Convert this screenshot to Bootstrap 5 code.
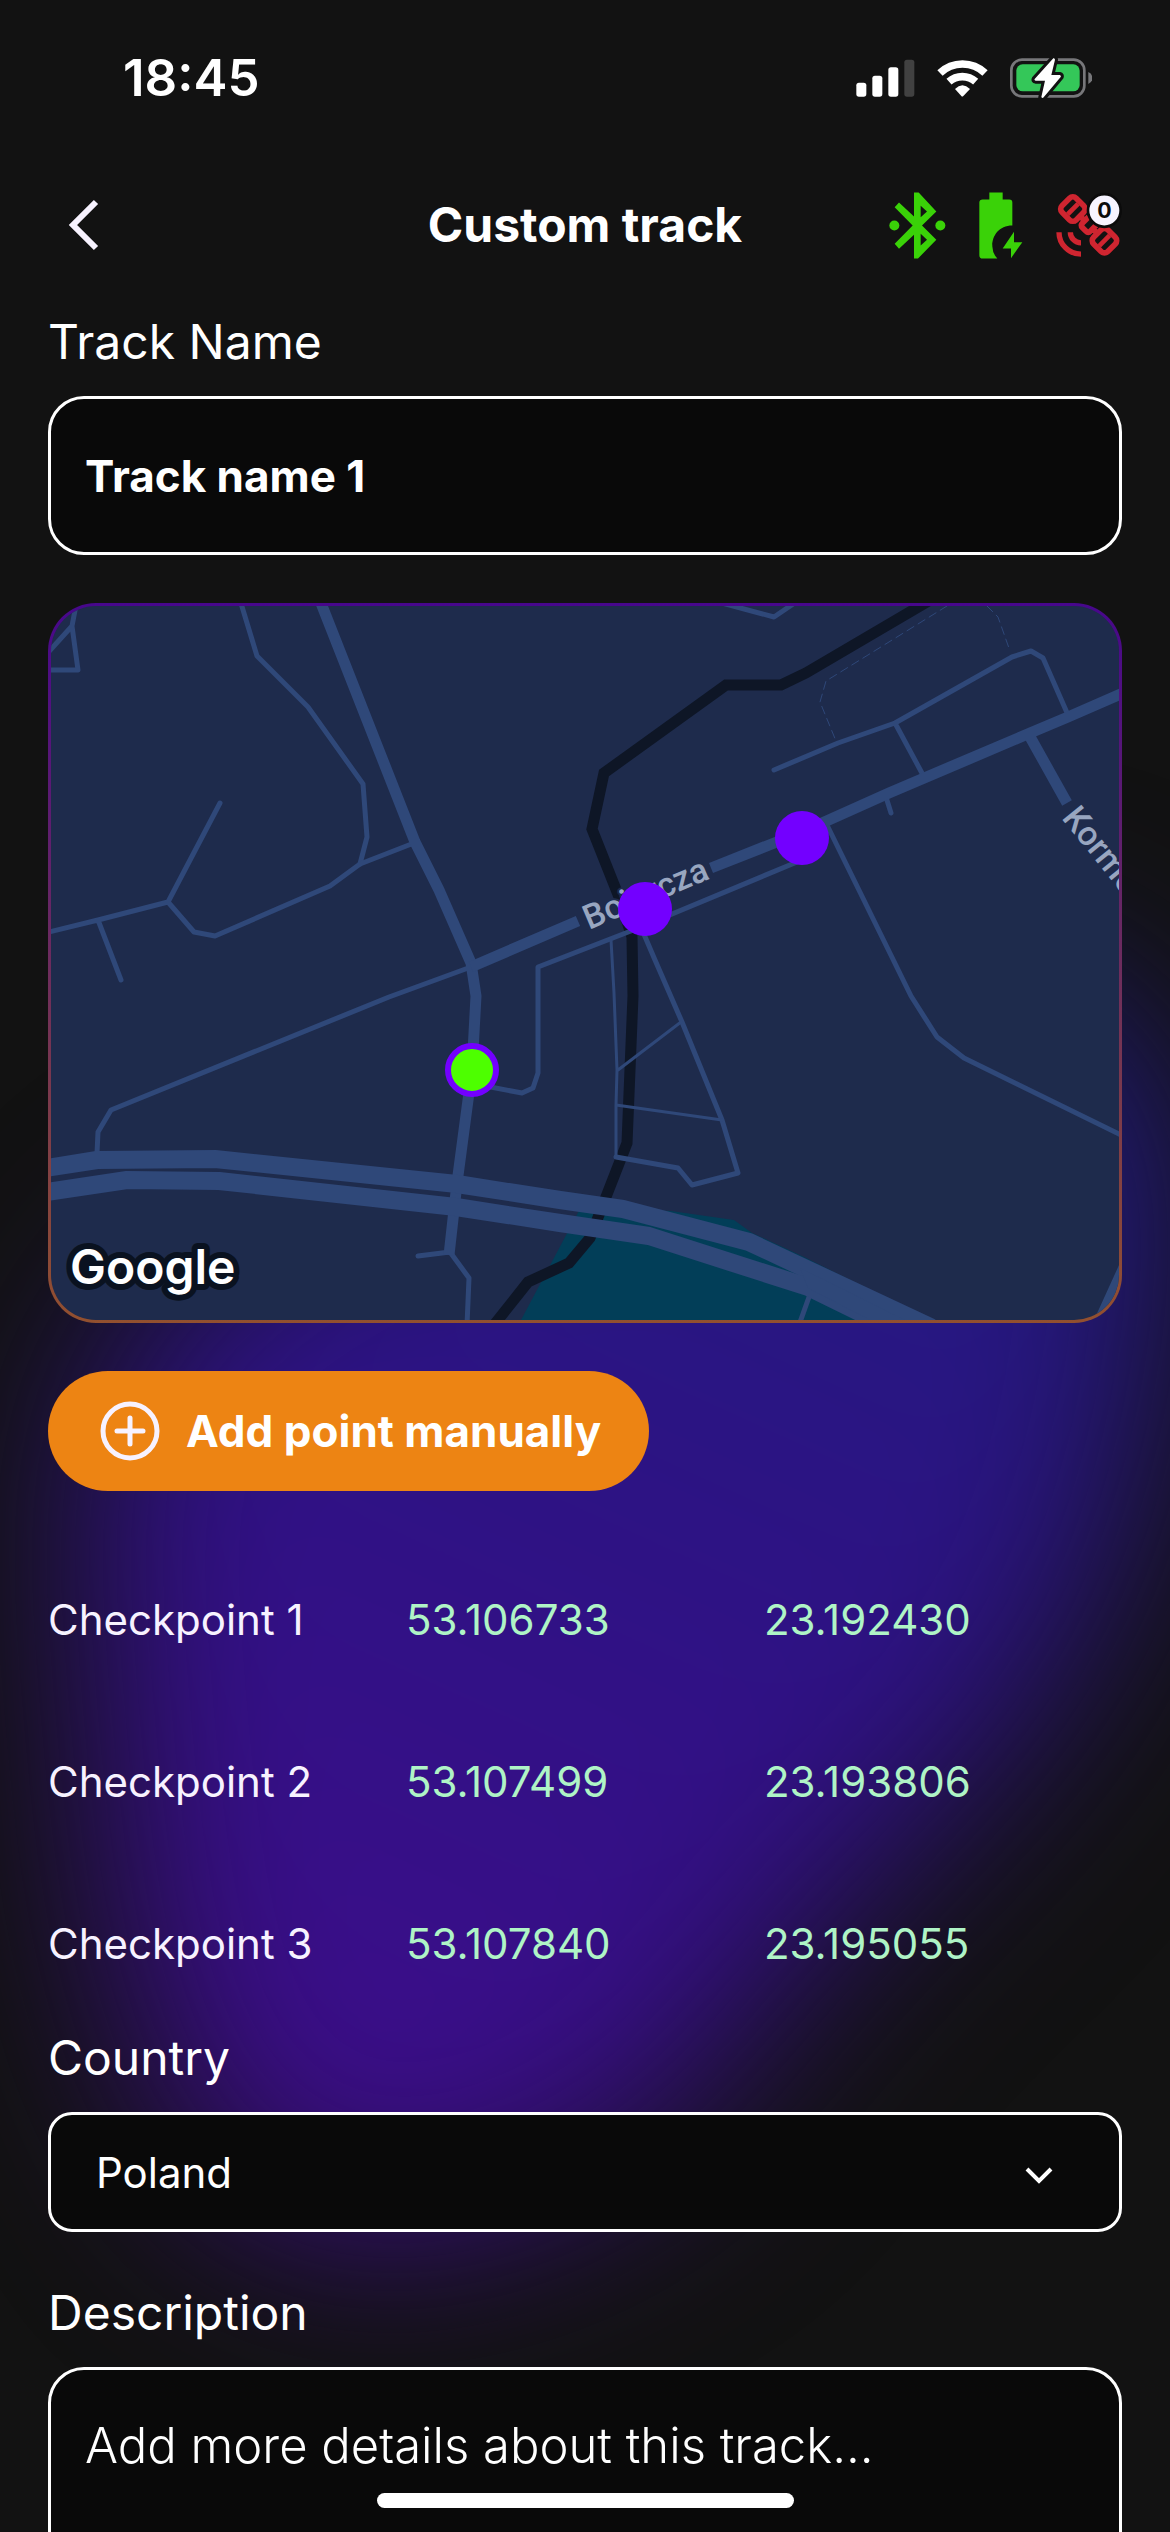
<!DOCTYPE html>
<html lang="en">
<head>
<meta charset="utf-8">
<meta name="viewport" content="width=device-width, initial-scale=1">
<title>Custom track</title>
<link href="https://cdn.jsdelivr.net/npm/bootstrap@5.3.0/dist/css/bootstrap.min.css" rel="stylesheet">
<style>
  body { background: #121212; color: #fff; font-family: Inter, "Liberation Sans", sans-serif; font-size: 42px; }
  .app-shell { position: relative; isolation: isolate; }
  .glow { position: absolute; inset: 0; width: 100%; height: 100%; z-index: -1; }
  .status-bar { height: 138px; padding: 18px 78px 0 123px; }
  .clock { font-size: 51px; font-weight: 600; }
  .status-icons { gap: 22px; }
  .app-header { height: 171px; padding: 3px 48px 0; }
  .header-side { flex: 1 1 0; }
  .back-btn { padding: 0 18px; }
  .app-title { font-size: 48px; font-weight: 700; line-height: 60px; }
  .header-icons { gap: 33px; }
  .screen { padding: 0 48px; }
  .field-label { display: block; padding-top: 3px; margin-bottom: 24px; font-size: 48px; line-height: 60px; font-weight: 400; }
  .field-box { background-color: #090909 !important; border: 3px solid #fff; color: #fff !important; border-radius: 36px; }
  .name-box { height: 159px; padding: 0 34px; font-size: 44px; font-weight: 700; }
  .country-box { height: 120px; padding: 0 45px; font-size: 42px; border-radius: 24px; font-weight: 400;
    background-image: url("data:image/svg+xml,%3Csvg xmlns='http://www.w3.org/2000/svg' viewBox='0 0 28 18'%3E%3Cpath d='M2 2l12 12L26 2' fill='none' stroke='white' stroke-width='4'/%3E%3C/svg%3E");
    background-size: 28px 18px; background-position: right 66px top 52px; }
  .details-box { height: 420px; padding: 46px 34px; font-size: 49px; line-height: 60px; font-weight: 300; resize: none; }
  .details-box::placeholder { color: #fff; opacity: 1; }
  .map-frame { height: 720px; padding: 3px; border-radius: 48px; background: linear-gradient(#47078c, #92502f); }
  .map-frame svg { display: block; width: 100%; height: 100%; border-radius: 45px; }
  .gap-48 { margin-bottom: 48px; }
  .add-btn { --bs-btn-color: #fff; --bs-btn-bg: #ed8413; --bs-btn-hover-bg: #d97508; --bs-btn-hover-color: #fff;
    height: 120px; padding: 0 48px 0 52px; gap: 26px; border: 0; font-size: 44px; font-weight: 700; border-radius: 60px; }
  .points { table-layout: fixed; width: 100%; line-height: 60px; }
  .points th, .points td { width: 33.333%; height: 162px; padding: 0; font-weight: 400; vertical-align: middle; }
  .points th { color: #f7f2ff; }
  .points td { color: #aff4c6; }
  .home-bar { position: fixed; bottom: 24px; left: 50%; width: 417px; height: 15px; margin-left: -208px; border-radius: 8px; background: #fff; }
</style>
</head>
<body>
<div class="app-shell vh-100 overflow-hidden">
  <svg class="glow" viewBox="0 0 1170 2532" preserveAspectRatio="none" aria-hidden="true">
    <defs>
      <linearGradient id="glowFill" gradientUnits="userSpaceOnUse" x1="950" y1="1100" x2="450" y2="2200">
        <stop offset="0" stop-color="#231a80"/><stop offset="0.45" stop-color="#2e1284"/><stop offset="1" stop-color="#3d0d8a"/>
      </linearGradient>
      <filter id="soft" x="-50%" y="-40%" width="200%" height="180%" color-interpolation-filters="sRGB"><feGaussianBlur stdDeviation="98"/></filter>
    </defs>
    <path filter="url(#soft)" fill="url(#glowFill)" d="M90 1420C130 1240 420 1150 640 1040C860 930 1130 940 1170 1120C1190 1300 1150 1500 1080 1640C1000 1790 850 1880 750 2020C630 2210 420 2250 290 2220C150 2170 100 1900 100 1720C80 1600 80 1500 90 1420Z"/>
  </svg>

  <div class="status-bar d-flex align-items-center justify-content-between">
    <div class="clock">18:45</div>
    <div class="status-icons d-flex align-items-center">
      <svg width="59" height="39" viewBox="47 85 177 117" role="img" aria-label="Signal"><g fill="#fff"><rect x="48" y="156" width="30" height="42" rx="8"/><rect x="96" y="135" width="30" height="63" rx="8"/><rect x="144" y="110" width="30" height="88" rx="8"/><rect x="192" y="87" width="30" height="111" rx="8" opacity=".2"/></g></svg>
      <svg width="51" height="39" viewBox="288 85 153 117" role="img" aria-label="Wi-Fi"><g fill="none" stroke="#fff" stroke-width="23"><path d="M297 127A98 98 0 0 1 432 127"/><path d="M324 153A60 60 0 0 1 404 153"/></g><path d="M342 175Q364 153 387 175L367 196Q364 199 361 196Z" fill="#fff"/></svg>
      <svg width="82" height="42" viewBox="506 80 246 126" role="img" aria-label="Battery charging"><rect x="510" y="88" width="219" height="110" rx="32" fill="none" stroke="#77777a" stroke-width="8"/><path d="M741 125Q753 130 753 143T741 161Z" fill="#77777a"/><rect x="525" y="102" width="190" height="81" rx="19" fill="#34c759"/><path d="M636 84L580 146Q578 150 583 151H611L600 200Q603 206 607 201L658 140Q660 135 655 134H630L641 88Q640 82 636 84Z" fill="#fff" stroke="#121212" stroke-width="18" paint-order="stroke"/></svg>
    </div>
  </div>

  <header class="app-header d-flex align-items-center">
    <div class="header-side d-flex">
      <button type="button" class="btn back-btn border-0 d-flex" aria-label="Back"><svg width="36" height="54" viewBox="0 0 36 54" fill="none" stroke="#f7f2ff" stroke-width="6"><path d="M30 4L7 27L30 50"/></svg></button>
    </div>
    <h1 class="app-title m-0">Custom track</h1>
    <div class="header-side header-icons d-flex justify-content-end align-items-center">
      <svg width="57" height="67" viewBox="147 485 171 200" fill="#3ad208" role="img" aria-label="Bluetooth connected"><path fill-rule="evenodd" d="M222 486H236L289 543L246 585L289 628L234 684H222V613L177 655L164 640L218 585L164 530L177 516L222 558ZM242 526V560L261 543ZM242 610V645L261 628Z"/><circle cx="163" cy="585" r="15"/><circle cx="301" cy="585" r="15"/></svg>
      <svg width="44" height="67" viewBox="419 485 132 200" fill="#3ad208" role="img" aria-label="Device charging"><path d="M430 507H450V486H490V507H510Q519 507 519 516V585C478 585 458 617 459 648Q460 670 474 684H430Q420 684 420 674V516Q420 507 430 507Z"/><path d="M524 604L490 654H515V683L549 635H524Z"/></svg>
      <svg width="66" height="67" viewBox="647 485 198 200" role="img" aria-label="Satellites: 0"><g fill="none" stroke="#cf2530" stroke-width="17"><g transform="rotate(45 745 583)"><rect x="648" y="553" width="60" height="60" rx="14"/><path d="M678 561v44" stroke-width="14"/><rect x="782" y="553" width="60" height="60" rx="14"/><path d="M812 561v44" stroke-width="14"/><path d="M708 583H728M762 583H782M728 566V592Q728 602 738 602H752Q762 602 762 592V566"/></g><path d="M656 605A66 66 0 0 0 722 671M690 605A32 32 0 0 0 722 637" stroke-width="16"/></g><circle cx="792" cy="540" r="49" fill="#f7f4ff" stroke="#0b0b0b" stroke-width="8"/><text x="792" y="563" text-anchor="middle" font-size="64" font-weight="700" fill="#0b0b0b">0</text></svg>
    </div>
  </header>

  <main class="screen">
    <label class="field-label" for="trackName">Track Name</label>
    <input id="trackName" type="text" class="form-control field-box name-box gap-48" value="Track name 1">

    <div class="map-frame gap-48">
      <svg viewBox="51 606 1068 714" preserveAspectRatio="xMidYMid slice" role="img" aria-label="Track map">
        <rect x="0" y="500" width="1300" height="900" fill="#1e2b4c"/>
        <path fill="#023e58" d="M521 1320L581 1207L671 1211L734 1220L752 1233L804 1257L930 1320Z"/>
        <path fill="none" stroke="#0e1626" stroke-width="11" d="M937 596L806 673L781 685H726L604 773L592 829L619 897L632 937L633 996L627 1143L597 1220L590 1238L569 1263L528 1282L490 1330"/>
        <g fill="none" stroke="#2f4879" stroke-linejoin="round" stroke-linecap="round">
          <g stroke-width="5">
            <path d="M45 656L72 626L77 600M72 626L78 670H45"/>
            <path d="M240 600L257 656L308 707L363 784L367 837L360 864"/>
            <path d="M414 843L360 864L330 886L215 936L194 932L168 902L98 920L45 933M220 803L168 902M98 920L121 980"/>
            <path d="M471 967L389 997L111 1110L98 1132L97 1153"/>
            <path d="M418 1256L450 1252L469 1278L467 1325"/>
            <path d="M480 1085L522 1093L533 1088L538 1073V967L636 929L797 862L826 823L911 996L937 1037L964 1058L1125 1137"/>
            <path d="M616 1157L678 1168L692 1185L738 1173L722 1120L682 1022L655 960L640 925"/>
            <path d="M718 602L774 617L796 602"/>
            <path d="M774 770L838 743L895 723L1012 657L1031 651L1043 658L1068 715M895 723L923 775M886 797L891 813"/>
            <path d="M809 1297L799 1325"/>
          </g>
          <path stroke-width="3" d="M611 940L614 993L617 1070L616 1105V1157M618 1070L681 1022M616 1105L722 1120"/>
          <path stroke-width="1" stroke-dasharray="8 5" d="M947 606L826 681L820 702L836 741M987 606L998 617L1010 651"/>
          <g stroke-width="11" stroke-linecap="butt">
            <path d="M319 598L415 842L439 890L471 963L476 996L472 1070L457 1183L449 1255"/>
            <path d="M471 967L578 921M711 868L802 832L889 793L1030 733L1068 717L1125 692M1029 735L1067 803"/>
          </g>
          <g stroke-width="18">
            <path d="M40 1169L97 1160L215 1159L457 1184L560 1200L623 1209L749 1242L930 1327"/>
            <path d="M40 1193L127 1180L219 1181L456 1207L560 1223L649 1236L808 1287L890 1327"/>
          </g>
        </g>
        <path fill="#2f4879" d="M800 1268L905 1320H870L808 1288ZM1119 1265L1094 1320H1119Z"/>
        <g fill="#98a6c0" font-family="Roboto, sans-serif" font-size="34" font-weight="500" stroke="#1e2b4c" stroke-width="4" paint-order="stroke">
          <text transform="translate(589 930) rotate(-23)">Bojarcza</text>
          <text transform="translate(1061 818) rotate(51)">Kormo</text>
        </g>
        <circle cx="645" cy="909" r="27" fill="#7300ff"/>
        <circle cx="802" cy="838" r="27" fill="#7300ff"/>
        <circle cx="472" cy="1070" r="24" fill="#4dff00" stroke="#7300ff" stroke-width="6"/>
        <text x="70" y="1284" font-size="48" font-weight="600" fill="#fff" stroke="#0a1220" stroke-width="12" stroke-linejoin="round" paint-order="stroke">Google</text>
      </svg>
    </div>

    <button type="button" class="btn add-btn d-inline-flex align-items-center gap-48">
      <svg width="60" height="60" viewBox="0 0 60 60" fill="none" stroke="#f7f2ff" stroke-width="5" stroke-linecap="round" aria-hidden="true"><circle cx="30" cy="30" r="27"/><path d="M30 17V43M17 30H43"/></svg>
      <span>Add point manually</span>
    </button>

    <table class="points">
      <tbody>
        <tr><th scope="row">Checkpoint 1</th><td>53.106733</td><td>23.192430</td></tr>
        <tr><th scope="row">Checkpoint 2</th><td>53.107499</td><td>23.193806</td></tr>
        <tr><th scope="row">Checkpoint 3</th><td>53.107840</td><td>23.195055</td></tr>
      </tbody>
    </table>

    <label class="field-label" for="country">Country</label>
    <select id="country" class="form-select field-box country-box gap-48"><option selected>Poland</option></select>

    <label class="field-label" for="details">Description</label>
    <textarea id="details" class="form-control field-box details-box" placeholder="Add more details about this track..."></textarea>
  </main>
  <div class="home-bar"></div>
</div>
<script src="https://cdn.jsdelivr.net/npm/bootstrap@5.3.0/dist/js/bootstrap.bundle.min.js"></script>
</body>
</html>
